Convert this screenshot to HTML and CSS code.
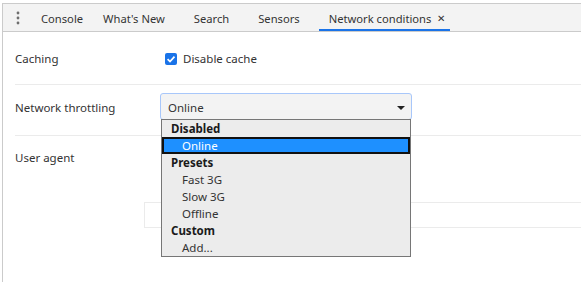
FILE: index.html
```html
<!DOCTYPE html>
<html lang="en">

<head>
    <meta charset="UTF-8">
    <title>Network conditions</title>
    <link rel="stylesheet" href="styles.css">
</head>

<body>
    <div class="panel">
        <div class="tabbar">
            <div class="tab-menu">
                <svg width="4" height="14" viewBox="0 0 4 14">
                    <circle cx="2" cy="2" r="1.4" fill="#6e6e6e" />
                    <circle cx="2" cy="7" r="1.4" fill="#6e6e6e" />
                    <circle cx="2" cy="12" r="1.4" fill="#6e6e6e" />
                </svg>
            </div>
            <div class="tab">Console</div>
            <div class="tab closable">What's New<span class="tab-close">✕</span></div>
            <div class="tab closable">Search<span class="tab-close">✕</span></div>
            <div class="tab closable">Sensors<span class="tab-close">✕</span></div>
            <div class="tab closable selected">Network conditions<span class="tab-close">✕</span></div>
        </div>

        <div class="content">
            <div class="row row-caching">
                <div class="row-label">Caching</div>
                <div class="row-controls">
                    <label class="checkbox">
                        <span class="check-box">
                            <svg width="12" height="12" viewBox="0 0 12 12">
                                <path d="M2.6 6.2 L5 8.6 L9.5 3.6" fill="none" stroke="#fff" stroke-width="1.7" />
                            </svg>
                        </span>
                        Disable cache
                    </label>
                </div>
            </div>

            <div class="row row-throttling">
                <div class="row-label">Network throttling</div>
                <div class="row-controls">
                    <div class="select">
                        <span>Online</span>
                        <svg class="select-arrow" width="8" height="4" viewBox="0 0 8 4">
                            <path d="M0 0 L8 0 L4 4 Z" fill="#222" />
                        </svg>
                        <div class="dropdown">
                            <div class="dd-group">Disabled</div>
                            <div class="dd-option active">Online</div>
                            <div class="dd-group">Presets</div>
                            <div class="dd-option">Fast 3G</div>
                            <div class="dd-option">Slow 3G</div>
                            <div class="dd-option">Offline</div>
                            <div class="dd-group">Custom</div>
                            <div class="dd-option">Add...</div>
                        </div>
                    </div>
                </div>
            </div>

            <div class="row row-agent">
                <div class="row-label">User agent</div>
                <div class="row-controls">
                    <div class="agent-spacer"></div>
                    <div class="agent-input"></div>
                </div>
            </div>
        </div>
    </div>
</body>

</html>
```

FILE: styles.css
```css
body {
    margin: 0;
    background-color: #fff;
    font-family: "Noto Sans", "Open Sans", sans-serif;
    font-size: 11.5px;
    color: #333;
}

.panel {
    margin: 3px 0 0 2px;
    border-top: 1px solid #cbcbcb;
    border-left: 1px solid #cbcbcb;
    height: 278px;
}

.tabbar {
    display: flex;
    align-items: center;
    height: 27px;
    background-color: #f3f3f3;
    border-bottom: 1px solid #cbcbcb;
    font-size: 11.2px;
}

.tab-menu {
    width: 27px;
    display: flex;
    justify-content: center;
    align-items: center;
    padding-left: 1px;
}

.tab {
    display: flex;
    align-items: center;
    height: 100%;
    padding: 1px 10px 0;
    color: #333;
    box-sizing: border-box;
    white-space: nowrap;
}

.tab.closable {
    padding-right: 5px;
}

.tab-close {
    visibility: hidden;
    width: 8px;
    margin-left: 6px;
    font-size: 10px;
    color: #333;
}

.tab.selected {
    border-bottom: 2px solid #1a73e8;
    padding-top: 3px;
}

.tab.selected .tab-close {
    visibility: visible;
}

.content {
    padding-left: 12px;
}

.row {
    display: flex;
    align-items: center;
    border-bottom: 1px solid #ebebeb;
}

.row-label {
    width: 145px;
    flex-shrink: 0;
    line-height: 20px;
    padding-top: 2px;
}

.row-controls {
    flex: 1;
}

.row-caching {
    padding: 15px 0 15px;
}

.row-throttling {
    padding: 8px 0 15px;
}

.row-agent {
    align-items: flex-start;
    padding: 10px 0 0;
    border-bottom: none;
}

.checkbox {
    display: flex;
    align-items: center;
    line-height: 20px;
    margin-left: 5px;
    padding-top: 2px;
}

.check-box {
    width: 12px;
    height: 12px;
    border-radius: 2px;
    background-color: #1a73e8;
    margin-right: 6px;
    display: flex;
}

.select {
    position: relative;
    border: 1px solid #a8c7fa;
    border-radius: 3px;
    background-color: #f3f3f3;
    display: flex;
    align-items: center;
    justify-content: space-between;
    padding: 1px 6px 0 7px;
    box-sizing: border-box;
    width: 252px;
    height: 27px;
    color: #333;
}

.select-arrow {
    margin-top: 1px;
}

.dropdown {
    position: absolute;
    top: 25px;
    left: 0;
    width: 250px;
    box-sizing: border-box;
    border: 1px solid #767676;
    background-color: #ececec;
    color: #222;
}

.dd-group {
    height: 17px;
    line-height: 18px;
    padding-left: 9px;
    font-weight: bold;
    color: #1a1a1a;
}

.dd-option {
    height: 17px;
    line-height: 18px;
    padding-left: 20px;
    color: #333;
    box-sizing: border-box;
}

.dd-option.active {
    background-color: #1e90ff;
    border: 2px solid #111;
    line-height: 14px;
    padding-left: 18px;
    color: #fff;
}

.agent-spacer {
    height: 56px;
}

.agent-input {
    margin-left: -16px;
    height: 24px;
    border: 1px solid #ebebeb;
    border-right: none;
}
```
